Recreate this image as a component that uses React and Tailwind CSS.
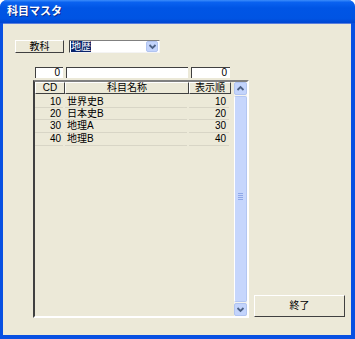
import React from 'react';

const font = "font-['Liberation_Sans','Noto_Sans_CJK_JP',sans-serif]";

const rows = [
  { cd: 10, name: '世界史B', order: 10, h: 'h-[12px]' },
  { cd: 20, name: '日本史B', order: 20, h: 'h-[12px]' },
  { cd: 30, name: '地理A', order: 30, h: 'h-[13px]' },
  { cd: 40, name: '地理B', order: 40, h: 'h-[13px]' },
];

const Chevron = ({ up = false }) => (
  <svg width="9" height="7" viewBox="0 0 9 7">
    <path
      d={up ? 'M1.5 5 L4.5 2 L7.5 5' : 'M1.5 2 L4.5 5 L7.5 2'}
      stroke="#4D6185"
      strokeWidth="1.8"
      fill="none"
    />
  </svg>
);

const ArrowBtn = ({ up }) => (
  <div className="h-[13px] flex items-center justify-center bg-[#C3D4FC] border border-[#B1C4F0] rounded-[2px]">
    <Chevron up={up} />
  </div>
);

const HeaderCell = ({ w, children }) => (
  <div
    className={`${w} h-[12px] flex items-center justify-center border-t border-l border-t-white border-l-white border-b border-r border-b-[#404040] border-r-[#404040] leading-none`}
  >
    {children}
  </div>
);

export default function App() {
  return (
    <div className={`w-[355px] h-[339px] bg-white ${font} text-[10px] text-black`}>
      <div className="w-[355px] h-[339px] rounded-t-[7px] bg-[#0850E2] flex flex-col overflow-hidden">
        {/* Title bar */}
        <div className="h-[23px] shrink-0 flex items-center pl-[7px] bg-[linear-gradient(180deg,#3C8DFB_0%,#0A62F0_10%,#0055E5_35%,#0054E3_80%,#0046D2_100%)]">
          <span className="text-white font-bold text-[11px] [text-shadow:1px_1px_#0A2A8C]">科目マスタ</span>
        </div>

        {/* Client */}
        <div className="flex-1 ml-[3px] mr-[4px] mb-[4px] bg-[#ECE9D8] border-t border-t-[#5A7EDC]">
          {/* 教科 row */}
          <div className="flex items-start pt-[16px] pl-[12px] gap-[5px]">
            <div className="w-[49px] h-[13px] flex items-center justify-center border border-t-white border-l-white border-b-[#404040] border-r-[#404040] leading-none">
              教科
            </div>
            <div className="w-[91px] h-[13px] flex items-center bg-white border border-t-[#808080] border-l-[#404040] border-b-[#F4F4F4] border-r-[#F4F4F4]">
              <span className="ml-[1px] bg-[#0A246A] text-white leading-[11px] h-[11px]">地歴</span>
              <div className="ml-auto mr-[1px] w-[12px] h-[11px] flex items-center justify-center bg-[#C3D4FC] border border-[#B1C4F0] rounded-[2px]">
                <Chevron />
              </div>
            </div>
          </div>

          {/* number row */}
          <div className="flex pl-[32px] mt-[14px] gap-[3px]">
            <div className="w-[28px] h-[11px] bg-white border-t border-l border-[#404040] flex items-center justify-end pr-[3px] leading-none">
              0
            </div>
            <div className="w-[122px] h-[11px] bg-white border-t border-l border-[#404040]" />
            <div className="w-[39px] h-[11px] bg-white border-t border-l border-[#404040] flex items-center justify-end pr-[3px] leading-none">
              0
            </div>
          </div>

          {/* list + button */}
          <div className="flex items-end pl-[30px] mt-[2px]">
            <div className="w-[216px] h-[238px] border-2 border-t-[#808080] border-l-[#404040] border-b-white border-r-white flex">
              <div className="flex-1 flex flex-col">
                <div className="flex">
                  <HeaderCell w="w-[30px]">CD</HeaderCell>
                  <HeaderCell w="w-[124px]">科目名称</HeaderCell>
                  <HeaderCell w="w-[42px]">表示順</HeaderCell>
                </div>
                <div className="pt-[2px]">
                  {rows.map((r) => (
                    <div key={r.cd} className={`flex ${r.h}`}>
                      <div className="w-[30px] pr-[2px]">
                        <div className="h-full border-b border-[#D8D5C6] flex items-center justify-end pr-[2px] leading-none">
                          {r.cd}
                        </div>
                      </div>
                      <div className="w-[124px] pr-[2px]">
                        <div className="h-full border-b border-[#D8D5C6] flex items-center pl-[2px] leading-none">
                          {r.name}
                        </div>
                      </div>
                      <div className="w-[42px] pr-[2px]">
                        <div className="h-full border-b border-[#D8D5C6] flex items-center justify-end pr-[3px] leading-none">
                          {r.order}
                        </div>
                      </div>
                    </div>
                  ))}
                </div>
              </div>
              {/* scrollbar */}
              <div className="w-[13px] flex flex-col bg-[#F4F3EE]">
                <ArrowBtn up />
                <div className="flex-1 my-[1px] bg-[#C6D6FC] border border-[#B3C6F2] border-l-white rounded-[2px] flex items-center justify-center">
                  <div className="flex flex-col gap-[1px] -mt-[6px]">
                    <div className="w-[5px] h-[1px] bg-[#8FA8E8]" />
                    <div className="w-[5px] h-[1px] bg-[#8FA8E8]" />
                    <div className="w-[5px] h-[1px] bg-[#8FA8E8]" />
                    <div className="w-[5px] h-[1px] bg-[#8FA8E8]" />
                  </div>
                </div>
                <ArrowBtn />
              </div>
            </div>
            <div className="ml-[5px] mb-[1px] w-[91px] h-[22px] flex items-center justify-center border border-t-white border-l-white border-b-[#404040] border-r-[#404040] leading-none">
              終了
            </div>
          </div>
        </div>
      </div>
    </div>
  );
}
